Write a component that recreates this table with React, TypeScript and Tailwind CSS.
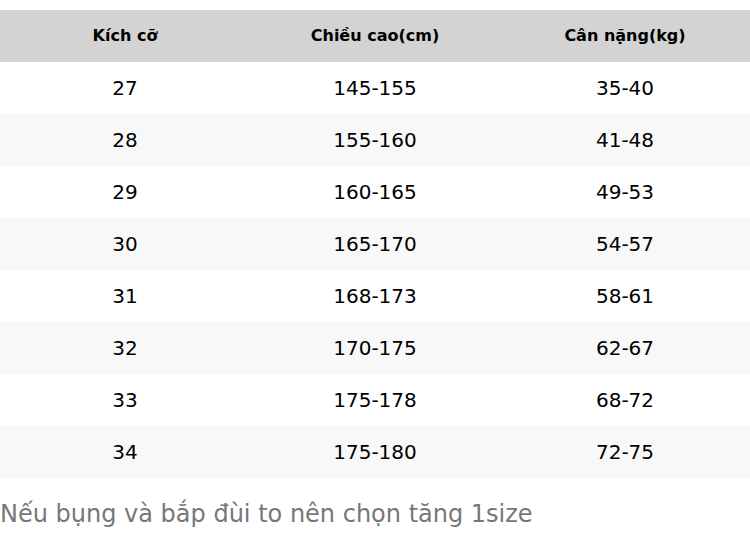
import React from "react";

const rows = [
  ["27", "145-155", "35-40"],
  ["28", "155-160", "41-48"],
  ["29", "160-165", "49-53"],
  ["30", "165-170", "54-57"],
  ["31", "168-173", "58-61"],
  ["32", "170-175", "62-67"],
  ["33", "175-178", "68-72"],
  ["34", "175-180", "72-75"],
];

export default function App() {
  return (
    <div className="w-[750px] h-[550px] bg-white pt-[10px]" style={{ fontFamily: '"DejaVu Sans", sans-serif' }}>
      <div className="grid grid-cols-3 h-[52px] bg-[#d3d3d3] items-center text-center text-[16px] font-bold text-black">
        <div>Kích cỡ</div>
        <div>Chiều cao(cm)</div>
        <div>Cân nặng(kg)</div>
      </div>
      {rows.map((r, i) => (
        <div
          key={i}
          className={`grid grid-cols-3 h-[52px] items-center text-center text-[20px] text-black ${i % 2 === 1 ? "bg-[#f8f8f8]" : "bg-white"}`}
        >
          <div>{r[0]}</div>
          <div>{r[1]}</div>
          <div>{r[2]}</div>
        </div>
      ))}
      <div className="mt-[20px] text-[24px] leading-[32px] text-[#777777]">Nếu bụng và bắp đùi to nên chọn tăng 1size</div>
    </div>
  );
}
